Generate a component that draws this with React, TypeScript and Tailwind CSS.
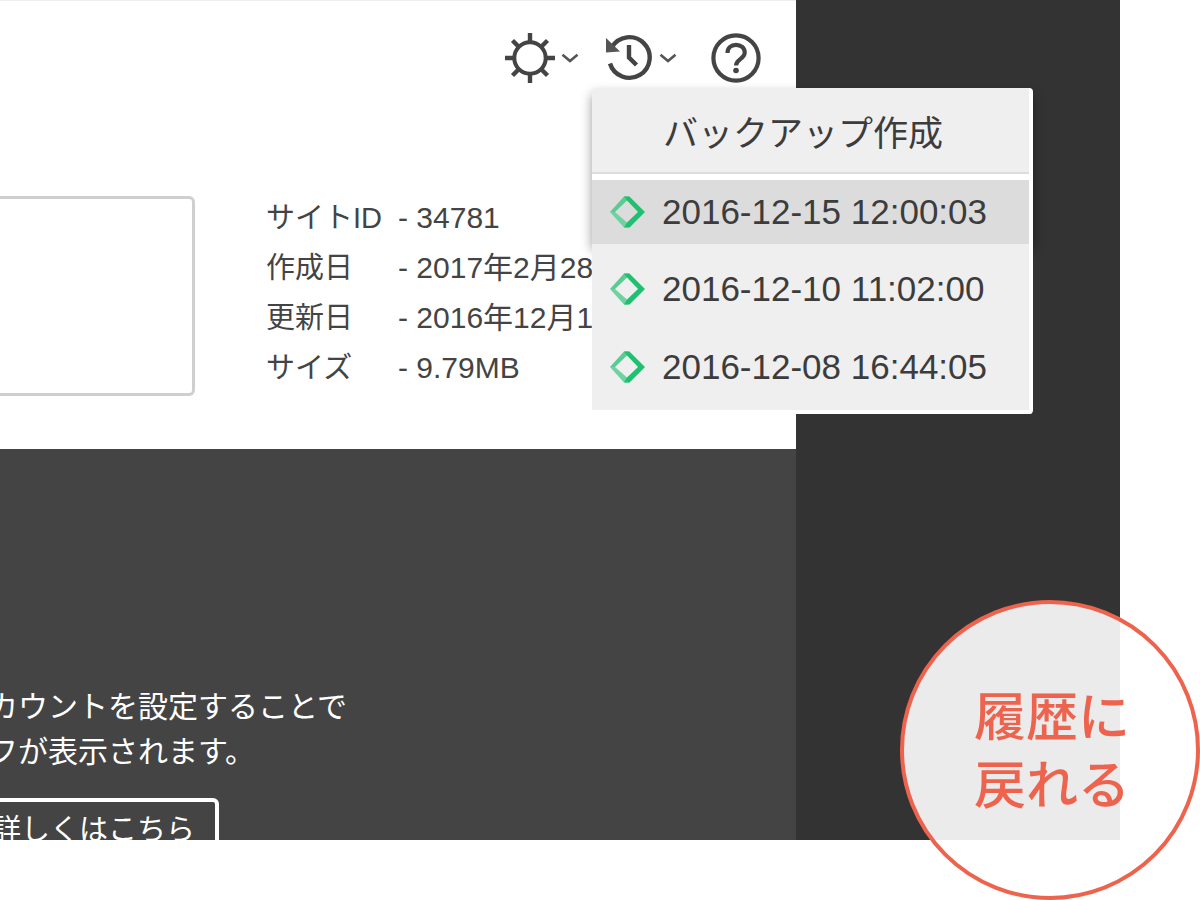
import type { ReactNode } from "react";

const siteInfo = [
    { label: "サイトID", value: "34781" },
    { label: "作成日", value: "2017年2月28" },
    { label: "更新日", value: "2016年12月1" },
    { label: "サイズ", value: "9.79MB" },
];

const backups = ["2016-12-15 12:00:03", "2016-12-10 11:02:00", "2016-12-08 16:44:05"];

function Chevron() {
    return (
        <svg width="18" height="10" viewBox="0 0 18 10" fill="none" stroke="#555" strokeWidth="2.6">
            <path d="M1.5 1.8 9 8l7.5-6.2" />
        </svg>
    );
}

function SunIcon() {
    return (
        <svg width="50" height="50" viewBox="0 0 50 50" fill="none" stroke="#444" strokeWidth="4.4">
            <circle cx="25" cy="25" r="15.7" strokeWidth="4" />
            <path d="M25 0v10M25 40v10M0 25h10M40 25h10M7.5 7.5l7 7M35.5 35.5l7 7M42.5 7.5l-7 7M14.5 35.5l-7 7" />
        </svg>
    );
}

function HistoryIcon() {
    return (
        <svg width="48" height="50" viewBox="0 0 48 50" fill="none" stroke="#444" strokeWidth="4">
            <path d="M7 14A20.3 20.3 0 1 1 5 30.5" strokeWidth="4.4" />
            <path d="M1 5v14.5l14-1z" fill="#555" stroke="none" />
            <path d="M24 12v12.5l7.5 7.5" strokeWidth="4.4" />
        </svg>
    );
}

function HelpIcon() {
    return (
        <svg width="50" height="50" viewBox="0 0 50 50" fill="none" stroke="#444" strokeWidth="4.2">
            <circle cx="25" cy="25" r="22.6" />
            <path d="M16.5 20c0-5 3.6-8.2 8.5-8.2s8.7 3.1 8.7 7.7c0 6.5-8.7 6.7-8.7 13" />
            <circle cx="25" cy="37.5" r="2.8" fill="#444" stroke="none" />
        </svg>
    );
}

function DiamondIcon() {
    return (
        <svg width="36" height="32" viewBox="0 0 36 32">
            <path d="M0 16 14 .5h5L17 4.500 5 16z" fill="#5acb92" />
            <path d="M0 16h5l12 10.500 2 5h-5z" fill="#6fd2a0" />
            <path d="M14 .5h5.500L35 16 19.500 31.500H14l3-5L28 16 17 4.500z" fill="#1fc171" />
        </svg>
    );
}

function IconButton({ label, children }: { label: string; children: ReactNode }) {
    return (
        <button type="button" aria-label={label} className="flex items-center gap-1.5">
            {children}
        </button>
    );
}

export default function App() {
    return (
        <div className="relative h-screen overflow-hidden bg-white pr-20 pb-15 font-['Liberation_Sans','Noto_Sans_CJK_JP',sans-serif]">
            <main className="flex h-full overflow-hidden bg-[#333]">
                <div className="flex min-w-0 flex-1 flex-col bg-[#444]">
                    {/* サイト情報 */}
                    <section className="relative shrink-0 border-t border-[#eee] bg-white pb-[53px]">
                        <header className="flex items-center justify-end pt-8 pr-[35px]">
                            <IconButton label="設定">
                                <SunIcon />
                                <Chevron />
                            </IconButton>
                            <div className="ml-[26px] flex">
                                <IconButton label="履歴">
                                    <HistoryIcon />
                                    <Chevron />
                                </IconButton>
                            </div>
                            <div className="ml-[34px] flex">
                                <IconButton label="ヘルプ">
                                    <HelpIcon />
                                </IconButton>
                            </div>
                        </header>

                        <div className="mt-[110px] flex items-end gap-[71px]">
                            <div className="h-[200px] w-[195px] shrink-0 rounded-r-md border-[3px] border-l-0 border-[#cdd0cf]" />
                            <dl className="pb-[3px] leading-[50px] whitespace-nowrap text-[#444]">
                                {siteInfo.map((item) => (
                                    <div key={item.label} className="flex">
                                        <dt className="w-[132px] text-[29px]">{item.label}</dt>
                                        <dd className="text-[30px]">- {item.value}</dd>
                                    </div>
                                ))}
                            </dl>
                        </div>

                        {/* バックアップ履歴メニュー */}
                        <div className="absolute top-[87px] -right-[237px] z-10 w-[441px] text-[35px] text-[#3c3c3c]">
                            <div className="rounded-t border-r-4 border-white bg-[#efefef] shadow-[0_6px_12px_rgba(0,0,0,0.4)]">
                                <button
                                    type="button"
                                    className="block w-full border-b-2 border-[#ddd] pt-[18px] pb-[10px] pl-[71px] text-left leading-14"
                                >
                                    バックアップ作成
                                </button>
                                <div className="h-[6px] bg-white" />
                                <div className="h-[64px]" />
                            </div>
                            <ul className="relative -mt-[64px] rounded-b border-r-4 border-b-4 border-white bg-[#efefef] pb-1">
                                {backups.map((date, i) => (
                                    <li key={date} className={i === 0 ? "mb-[6px]" : ""}>
                                        <button
                                            type="button"
                                            className={`flex w-full items-center gap-4 pl-[18px] ${i === 0 ? "h-16 bg-[#dcdcdc]" : "h-[78px]"}`}
                                        >
                                            <DiamondIcon />
                                            {date}
                                        </button>
                                    </li>
                                ))}
                            </ul>
                        </div>
                    </section>

                    {/* アカウント設定の案内 */}
                    <section className="-ml-3 pt-[235px] whitespace-nowrap text-white">
                        <p className="text-[30px] leading-[45px]">
                            カウントを設定することで
                            <br />
                            フが表示されます。
                        </p>
                        <a
                            href="#detail"
                            className="mt-6 inline-block rounded-md border-4 border-white pt-[6px] pr-5 pb-3 text-[29px] leading-[45px]"
                        >
                            詳しくはこちら
                        </a>
                    </section>
                </div>
                <aside className="w-[324px] shrink-0" />
            </main>

            <div className="absolute right-0 bottom-0 z-20 flex size-[300px] items-center justify-center rounded-full border-4 border-[#ee634d] bg-white/90 pt-1 pl-1">
                <p className="text-[52px] leading-[68px] font-medium text-[#ee634d]">
                    履歴に
                    <br />
                    戻れる
                </p>
            </div>
        </div>
    );
}
